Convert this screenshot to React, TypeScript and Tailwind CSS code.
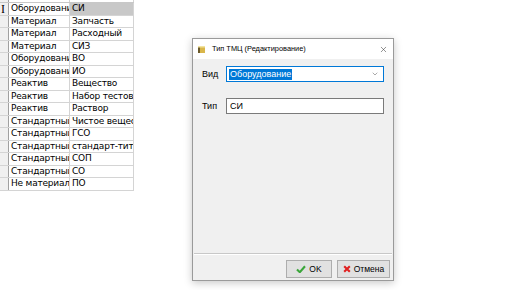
import { ChevronDown, X } from "lucide-react";

const rows: [string, string][] = [
  ["Оборудование", "СИ"],
  ["Материал", "Запчасть"],
  ["Материал", "Расходный"],
  ["Материал", "СИЗ"],
  ["Оборудование", "ВО"],
  ["Оборудование", "ИО"],
  ["Реактив", "Вещество"],
  ["Реактив", "Набор тестов"],
  ["Реактив", "Раствор"],
  ["Стандартный", "Чистое вещество"],
  ["Стандартный", "ГСО"],
  ["Стандартный", "стандарт-титр"],
  ["Стандартный", "СОП"],
  ["Стандартный", "СО"],
  ["Не материальный", "ПО"],
];

function Grid() {
  return (
    <div className="w-[134px] text-[9px] leading-none text-black font-['DejaVu_Sans',_sans-serif] tracking-[-0.2px]">
      <div className="grid grid-cols-[9px_61px_64px] h-[3px] border-b border-[#c8c8c8]">
        <div className="bg-[#f0f0f0] border-r border-[#a0a0a0]" />
        <div className="border-r border-[#d4d4d4]" />
        <div className="border-r border-[#d4d4d4]" />
      </div>
      {rows.map(([a, b], i) => (
        <div key={i} className="grid grid-cols-[9px_61px_64px] h-[12.5px] border-b border-[#d4d4d4]">
          <div className="relative bg-[#f0f0f0] border-r border-[#a0a0a0]">
            {i === 0 && (
              <span className="absolute left-[1px] top-[0px] text-[12px] font-['Liberation_Serif'] leading-none">I</span>
            )}
          </div>
          <div className="overflow-hidden whitespace-nowrap border-r border-[#d4d4d4] pl-[2px] flex items-center">
            {a}
          </div>
          <div
            className={
              "overflow-hidden whitespace-nowrap border-r border-[#d4d4d4] pl-[2px] flex items-center " +
              (i === 0 ? "bg-[#c8c8c8]" : "")
            }
          >
            {b}
          </div>
        </div>
      ))}
    </div>
  );
}

function AppIcon() {
  return (
    <svg width="7" height="7" viewBox="0 0 7 7">
      <rect x="0" y="0" width="7" height="7" fill="#d9b64a" />
      <rect x="0" y="0" width="2" height="7" fill="#6b5a2a" />
      <rect x="0" y="0" width="7" height="1.5" fill="#f2e3a0" />
    </svg>
  );
}

function Dialog() {
  return (
    <div className="absolute left-[192px] top-[38px] w-[202px] h-[243px] flex flex-col border border-[#9a9a9a] bg-[#f0f0f0] shadow-[0_2px_8px_rgba(0,0,0,0.22)] text-[9px] leading-none text-black font-['Liberation_Sans',_sans-serif]">
      <div className="h-[20px] bg-white flex items-center pl-[5px] pr-[5px] gap-[7px]">
        <AppIcon />
        <span className="flex-1 text-[7.4px]">Тип ТМЦ (Редактирование)</span>
        <X className="w-[9px] h-[9px] text-[#333]" strokeWidth={1.4} />
      </div>
      <div className="flex-1 flex flex-col pl-[9px] pr-[9px] pt-[7px]">
        <div className="flex items-center h-[16px]">
          <span className="w-[24px]">Вид</span>
          <div className="flex-1 h-[16px] bg-white border border-[#0078d7] flex items-center pl-[2px] pr-[4px]">
            <span className="bg-[#0078d7] text-white px-[1px] h-[11px] flex items-center">Оборудование</span>
            <span className="flex-1" />
            <ChevronDown className="w-[8px] h-[8px] text-[#555]" strokeWidth={1.5} />
          </div>
        </div>
        <div className="flex items-center h-[16px] mt-[16px]">
          <span className="w-[24px]">Тип</span>
          <div className="flex-1 h-[16px] bg-white border border-[#7a7a7a] flex items-center pl-[3px]">
            СИ
          </div>
        </div>
        <div className="flex-1" />
      </div>
      <div className="mx-[1px] border-t border-[#c8c8c8] border-b border-b-white" />
      <div className="h-[25px] flex items-start pt-[5px] justify-end gap-[5px] pr-[3px]">
        <button className="w-[46px] h-[18px] bg-[#e1e1e1] border border-[#adadad] flex items-center justify-center gap-[3px] text-[8.5px]">
          <svg width="10" height="8" viewBox="0 0 12 10">
            <path d="M1 5.5 L4.5 9 L11 1.5" fill="none" stroke="#3aa63a" strokeWidth="2.6" />
          </svg>
          OK
        </button>
        <button className="w-[53px] h-[18px] bg-[#e1e1e1] border border-[#adadad] flex items-center justify-center gap-[3px] text-[8.5px]">
          <svg width="8" height="8" viewBox="0 0 10 10">
            <path d="M1.5 1.5 L8.5 8.5 M8.5 1.5 L1.5 8.5" stroke="#e02020" strokeWidth="2.6" />
          </svg>
          Отмена
        </button>
      </div>
    </div>
  );
}

export default function App() {
  return (
    <div className="relative w-[516px] h-[290px] bg-white overflow-hidden">
      <Grid />
      <Dialog />
    </div>
  );
}
